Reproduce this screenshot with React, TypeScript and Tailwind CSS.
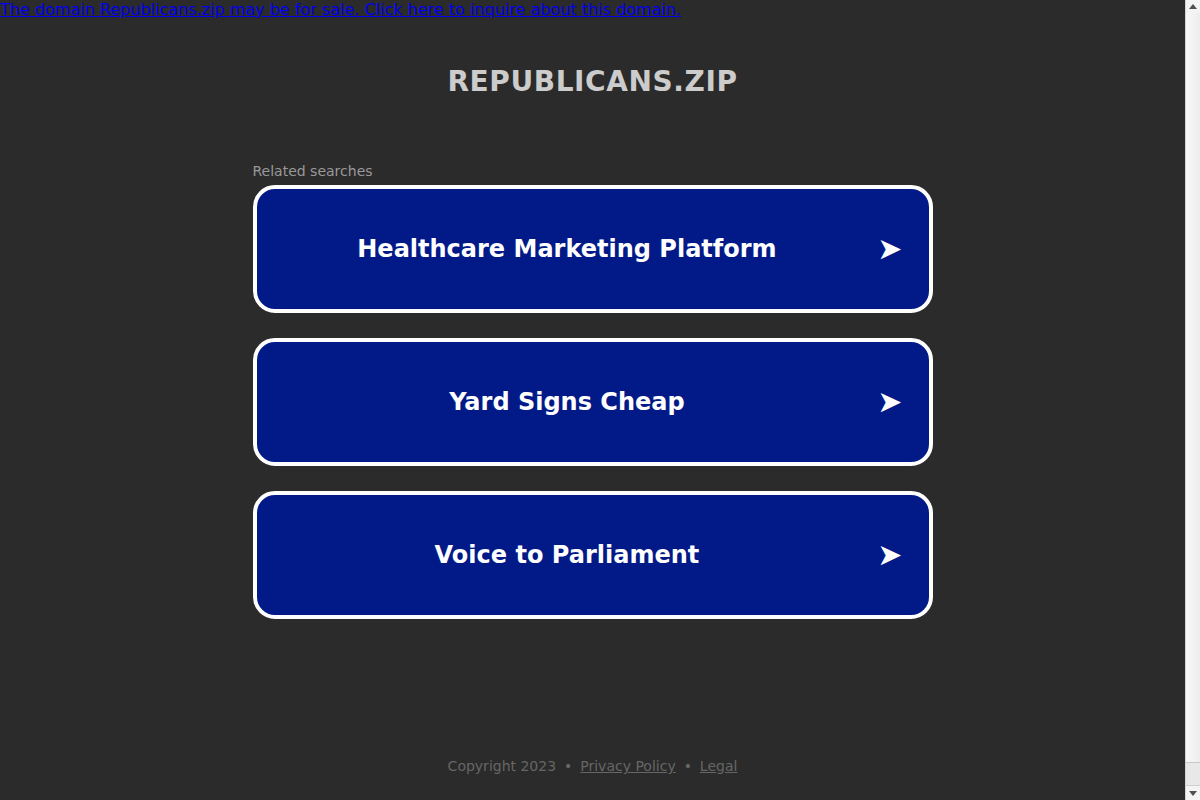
import React from 'react';

const searches = ['Healthcare Marketing Platform', 'Yard Signs Cheap', 'Voice to Parliament'];

function Scrollbar() {
  return (
    <div className="w-[15px] h-[800px] shrink-0 flex flex-col bg-[#e8e8e8] border-l border-[#d4d4d4]">
      <div className="h-[13px] flex items-center justify-center bg-[#f4f4f4]">
        <svg width="8" height="5" viewBox="0 0 8 5"><path d="M4 0L8 5H0Z" fill="#505050" /></svg>
      </div>
      <div className="h-[750px] bg-gradient-to-r from-[#f8f8f8] to-[#ededed] border-b border-[#c8c8c8]" />
      <div className="flex-1 border-b border-[#d0d0d0]" />
      <div className="h-[14px] flex items-center justify-center bg-[#f4f4f4]">
        <svg width="8" height="5" viewBox="0 0 8 5"><path d="M0 0H8L4 5Z" fill="#505050" /></svg>
      </div>
    </div>
  );
}

export default function App() {
  return (
    <div className="flex h-[800px] overflow-hidden bg-[#2b2b2b] font-['DejaVu_Sans',sans-serif]">
      <div className="flex-1 min-h-[822px] flex flex-col">
        {/* Sale banner */}
        <a href="#" className="block text-[16px] leading-[19px] text-[#0000ee] underline">
          The domain Republicans.zip may be for sale. Click here to inquire about this domain.
        </a>

        <h1 className="mt-[47px] text-center text-[28px] leading-[32px] font-bold text-[#cccccc] tracking-[0.6px]">
          REPUBLICANS.ZIP
        </h1>

        <div className="w-[680px] mx-auto mt-[63px]">
          <p className="text-[14px] leading-[20px] text-[#999999]">Related searches</p>
          <div className="mt-[4px] flex flex-col gap-[25px]">
            {searches.map((s) => (
              <a
                key={s}
                href="#"
                className="h-[128px] flex items-center rounded-[22px] border-4 border-white bg-[#021a87] text-white"
              >
                <span className="flex-1 text-center text-[24px] font-bold leading-[30px]">{s}</span>
                <span className="text-[30px] leading-[30px] mr-[26px]">➤</span>
              </a>
            ))}
          </div>
        </div>

        {/* Footer */}
        <div className="mt-[137px] text-center text-[14px] leading-[20px] text-[#666666]">
          Copyright 2023 <span className="mx-[3.5px]">•</span>{' '}
          <a href="#" className="underline">Privacy Policy</a> <span className="mx-[3.5px]">•</span>{' '}
          <a href="#" className="underline">Legal</a>
        </div>
      </div>
      <Scrollbar />
    </div>
  );
}
